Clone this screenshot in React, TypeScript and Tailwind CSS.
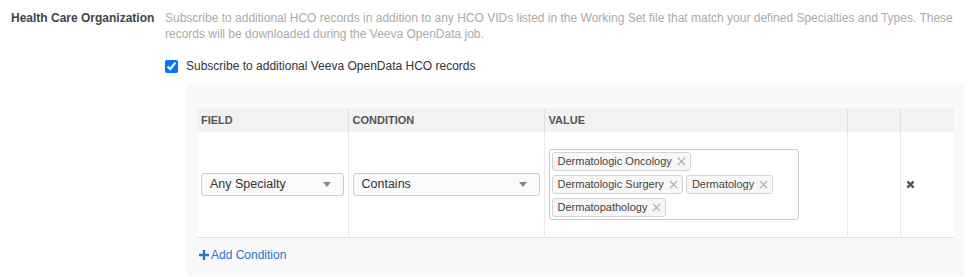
import React from 'react';

const tags = [
  ['Dermatologic Oncology'],
  ['Dermatologic Surgery', 'Dermatology'],
  ['Dermatopathology'],
];

const Tag: React.FC<{ label: string }> = ({ label }) => (
  <span className="inline-flex h-[19px] items-center gap-[5px] rounded-[3px] border border-[#d4d4d4] bg-[#f7f7f7] pl-[5px] pr-[4px] text-[11px] text-[#444]">
    {label}
    <svg width="9" height="9" viewBox="0 0 10 10" className="text-[#aaa]">
      <path d="M1 1L9 9M9 1L1 9" stroke="currentColor" strokeWidth="1.3" />
    </svg>
  </span>
);

const Select: React.FC<{ value: string; width: string }> = ({ value, width }) => (
  <div
    className={`flex h-[23px] ${width} items-center justify-between rounded-[3px] border border-[#ccc] bg-[#fafafa] pl-[8px] pr-[12px] text-[12.5px] text-[#333]`}
  >
    <span>{value}</span>
    <svg width="8" height="5" viewBox="0 0 8 5">
      <path d="M0 0H8L4 5Z" fill="#888" />
    </svg>
  </div>
);

export default function App() {
  return (
    <div className="w-[972px] h-[277px] overflow-hidden bg-white font-['Liberation_Sans',Arial,sans-serif]">
      <div className="flex pl-[11px] pt-[10px]">
        <div className="w-[154px] shrink-0 text-[12px] font-bold leading-[16px] text-[#444]">
          Health Care Organization
        </div>
        <div className="w-[790px] text-[12px] leading-[16px] text-[#aaa]">
          Subscribe to additional HCO records in addition to any HCO VIDs listed in the Working Set file that match
          your defined Specialties and Types. These records will be downloaded during the Veeva OpenData job.
        </div>
      </div>

      <label className="ml-[165px] mt-[15px] flex items-center gap-[8px] text-[12px] text-[#333]">
        <input type="checkbox" defaultChecked className="m-0 h-[13px] w-[13px]" />
        Subscribe to additional Veeva OpenData HCO records
      </label>

      <div className="ml-[187px] mt-[10px] w-[777px] bg-[#f9f9f9] px-[10px] pt-[23px] pb-[12px]">
        <table className="w-[757px] table-fixed border-collapse">
          <colgroup>
            <col className="w-[151px]" />
            <col className="w-[196px]" />
            <col className="w-[303px]" />
            <col className="w-[53px]" />
            <col className="w-[54px]" />
          </colgroup>
          <thead>
            <tr className="h-[24px] bg-[#f2f2f2] text-left text-[11px] font-bold text-[#555]">
              <th className="px-[4px]">FIELD</th>
              <th className="border-l border-[#e2e2e2] px-[4px]">CONDITION</th>
              <th className="border-l border-[#e2e2e2] px-[4px]">VALUE</th>
              <th className="border-l border-[#e2e2e2]"></th>
              <th className="border-l border-[#e2e2e2]"></th>
            </tr>
          </thead>
          <tbody>
            <tr className="h-[105px] border-b border-[#e2e2e2] bg-white">
              <td className="px-[4px] align-middle">
                <Select value="Any Specialty" width="w-[143px]" />
              </td>
              <td className="border-l border-[#e8e8e8] px-[4px] align-middle">
                <Select value="Contains" width="w-[187px]" />
              </td>
              <td className="border-l border-[#e8e8e8] px-[4px] align-middle">
                <div className="flex w-[250px] flex-col gap-[4px] rounded-[3px] border border-[#ccc] bg-white p-[2px]">
                  {tags.map((row, i) => (
                    <div key={i} className="flex gap-[3px]">
                      {row.map((t) => (
                        <Tag key={t} label={t} />
                      ))}
                    </div>
                  ))}
                </div>
              </td>
              <td className="border-l border-[#e8e8e8]"></td>
              <td className="border-l border-[#e8e8e8] pl-[5px] align-middle">
                <svg width="9" height="9" viewBox="0 0 10 10">
                  <path d="M1.5 1.5L8.5 8.5M8.5 1.5L1.5 8.5" stroke="#555" strokeWidth="2.6" />
                </svg>
              </td>
            </tr>
          </tbody>
        </table>
        <div className="mt-[8px] flex items-center gap-[2px] pl-[2px] text-[12px] text-[#2a73c5]">
          <svg width="10" height="10" viewBox="0 0 10 10">
            <path d="M5 0V10M0 5H10" stroke="currentColor" strokeWidth="2.4" />
          </svg>
          <span>Add Condition</span>
        </div>
      </div>
    </div>
  );
}
